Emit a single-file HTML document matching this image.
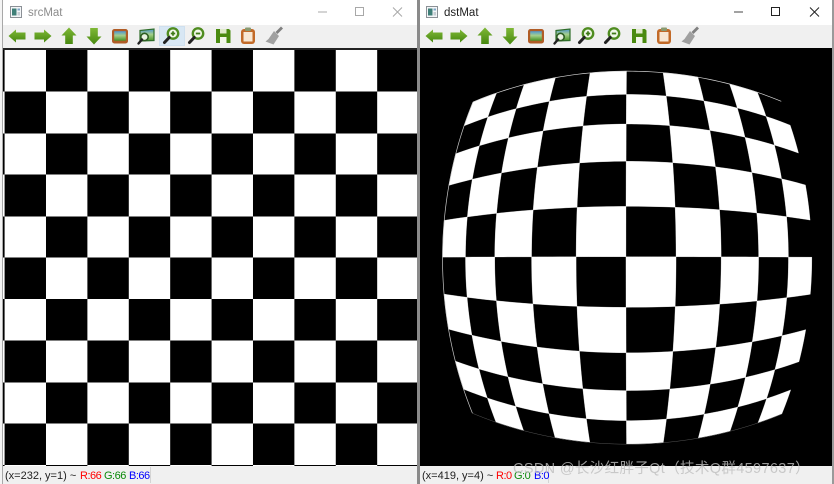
<!DOCTYPE html>
<html><head><meta charset="utf-8"><style>
html,body{margin:0;padding:0;width:834px;height:484px;overflow:hidden;background:#fff}
body{position:relative;font-family:"Liberation Sans","Noto Sans CJK SC",sans-serif}
.a{position:absolute}
.t{position:absolute;white-space:nowrap;font-size:11px;line-height:14px;top:468.500px;color:#222}
.k{letter-spacing:-.5px}
</style></head><body>
<div class="a" style="left:0;top:0;width:3px;height:484px;background:#f4f4f4"></div>
<div class="a" style="left:2px;top:0;width:1px;height:484px;background:#a8a8a8"></div>
<div class="a" style="left:3px;top:25px;width:414px;height:23px;background:#f0f0f0"></div>
<div class="a" style="left:3px;top:48px;width:414px;height:2px;background:#222"></div>
<div class="a" style="left:3px;top:50px;width:414px;height:416px;background:repeating-conic-gradient(#000 0 25%,#fff 0 50%) 1.6px 0/82.8px 83px"></div>
<div class="a" style="left:3px;top:466px;width:414px;height:18px;background:#f0f0f0"></div>
<div class="a" style="left:150px;top:467px;width:1px;height:16px;background:#d4d4d4"></div>
<div class="a" style="left:417px;top:0;width:3px;height:484px;background:#8a8a8a"></div>
<div class="a" style="left:420px;top:25px;width:412px;height:23px;background:#f0f0f0"></div>
<div class="a" style="left:420px;top:466px;width:412px;height:18px;background:#f0f0f0"></div>
<div class="a" style="left:548px;top:467px;width:1px;height:16px;background:#d4d4d4"></div>
<div class="a" style="left:832px;top:0;width:2px;height:484px;background:#9a9a9a"></div>
<div class="a" style="left:159px;top:26px;width:26px;height:20px;background:#d8e7f4;box-shadow:inset 0 0 0 1px #cfe0ef"></div>

<svg class="a" style="left:420px;top:48px" width="412" height="418" viewBox="420 48 412 418"><rect x="420" y="48" width="412" height="418" fill="#000"/><g id="m"></g></svg>

<svg class="a" style="left:0;top:0" width="834" height="50" viewBox="0 0 834 50">
<defs>
<linearGradient id="g" x1="0" y1="0" x2="0" y2="1"><stop offset="0" stop-color="#7fb836"/><stop offset="1" stop-color="#478810"/></linearGradient>
<linearGradient id="sky" x1="0" y1="0" x2="0" y2="1"><stop offset="0" stop-color="#4f96d0"/><stop offset=".45" stop-color="#a5cf8c"/><stop offset="1" stop-color="#459324"/></linearGradient>
<symbol id="l" viewBox="0 0 24 24" overflow="visible"><path d="M3.500 12L11 5.500V8.500H20.500V15.500H11V18.500Z" fill="url(#g)"/></symbol>
<symbol id="r" viewBox="0 0 24 24" overflow="visible"><path d="M20.500 12L13 5.500V8.500H3.500V15.500H13V18.500Z" fill="url(#g)"/></symbol>
<symbol id="u" viewBox="0 0 24 24" overflow="visible"><path d="M12 3.500L19.500 11.500H15.800V20H8.200V11.500H4.500Z" fill="url(#g)"/></symbol>
<symbol id="d" viewBox="0 0 24 24" overflow="visible"><path d="M12 20.500L19.500 12.500H15.800V4H8.200V12.500H4.500Z" fill="url(#g)"/></symbol>
<symbol id="p" viewBox="0 0 24 24" overflow="visible"><rect x="4" y="5" width="16" height="14.500" rx="2.500" fill="#b05c26"/><rect x="6.200" y="7.200" width="11.600" height="9.500" fill="url(#sky)"/></symbol>
<symbol id="f" viewBox="0 0 24 24" overflow="visible"><path d="M6 6.500L20 5V16.500L6 17Z" fill="url(#sky)" stroke="#2f6d2a" stroke-width="1.200"/><circle cx="10.500" cy="13" r="3.700" fill="#e8f2e0" stroke="#2e5e22" stroke-width="1.600"/><path d="M8 15.500L4.500 19.500" stroke="#222" stroke-width="2.400" stroke-linecap="round"/></symbol>
<symbol id="i" viewBox="0 0 24 24" overflow="visible"><circle cx="13" cy="9.500" r="5.200" fill="#f2f7ea" stroke="#4f8c20" stroke-width="2.400"/><path d="M10.800 9.500H15.200M13 7.300V11.700" stroke="#3f7a18" stroke-width="1.700"/><path d="M9.200 13.500L4.500 18.500" stroke="#222" stroke-width="3" stroke-linecap="round"/></symbol>
<symbol id="o" viewBox="0 0 24 24" overflow="visible"><circle cx="13" cy="9.500" r="5.200" fill="#f2f7ea" stroke="#4f8c20" stroke-width="2.400"/><path d="M10.800 9.500H15.200" stroke="#3f7a18" stroke-width="1.800"/><path d="M9.200 13.500L4.500 18.500" stroke="#222" stroke-width="3" stroke-linecap="round"/></symbol>
<symbol id="s" viewBox="0 0 24 24" overflow="visible"><path d="M5 5H18L19.500 6.500V19H5Z" fill="#4a8a10"/><rect x="9" y="5" width="6.500" height="4.500" fill="#e0eacc"/><rect x="9" y="13" width="6.500" height="6" fill="#f2f6ea"/></symbol>
<symbol id="c" viewBox="0 0 24 24" overflow="visible"><rect x="5" y="5" width="14" height="15" rx="3" fill="#c26a28"/><rect x="7.500" y="8" width="9" height="9.500" fill="#f8e8d4"/><rect x="9" y="3.500" width="6" height="3.500" rx="1" fill="#8a9a70"/></symbol>
<symbol id="b" viewBox="0 0 24 24" overflow="visible"><path d="M20 3.500L14.500 9" stroke="#808080" stroke-width="2.800"/><path d="M12 7L17 12L11.500 20.500L3.500 17.500L6.500 15Z" fill="#a0a0a0"/></symbol>
<symbol id="w" viewBox="0 0 12 12" overflow="visible"><rect x=".5" y=".5" width="11" height="11" fill="#f4f6f8" stroke="#8b9096"/><rect x="2" y="2.500" width="4.500" height="7" fill="#3f7f78"/><rect x="7.500" y="2.500" width="2.500" height="2" fill="#7fa8c8"/><rect x="7.500" y="6" width="2.500" height="3.500" fill="#c4ccd2"/></symbol>
</defs>
<use href="#w" x="10" y="6" width="12" height="12"/>
<use href="#w" x="426" y="6" width="12" height="12"/>
<use href="#l" x="5" y="24" width="24" height="24"/><use href="#r" x="31" y="24" width="24" height="24"/><use href="#u" x="57" y="24" width="24" height="24"/><use href="#d" x="82" y="24" width="24" height="24"/><use href="#p" x="108" y="24" width="24" height="24"/><use href="#f" x="134" y="24" width="24" height="24"/><use href="#i" x="160" y="24" width="24" height="24"/><use href="#o" x="185" y="24" width="24" height="24"/><use href="#s" x="211" y="24" width="24" height="24"/><use href="#c" x="236" y="24" width="24" height="24"/><use href="#b" x="262" y="24" width="24" height="24"/>
<use href="#l" x="422" y="24" width="24" height="24"/><use href="#r" x="447" y="24" width="24" height="24"/><use href="#u" x="473" y="24" width="24" height="24"/><use href="#d" x="498" y="24" width="24" height="24"/><use href="#p" x="524" y="24" width="24" height="24"/><use href="#f" x="550" y="24" width="24" height="24"/><use href="#i" x="575" y="24" width="24" height="24"/><use href="#o" x="601" y="24" width="24" height="24"/><use href="#s" x="627" y="24" width="24" height="24"/><use href="#c" x="652" y="24" width="24" height="24"/><use href="#b" x="678" y="24" width="24" height="24"/>
<g fill="none" stroke-width="1"><path d="M318 12H327" stroke="#a8a8a8"/><rect x="355.500" y="7.500" width="8" height="8" stroke="#a8a8a8"/><path d="M393 7.500L402 16.500M402 7.500L393 16.500" stroke="#a8a8a8"/>
<path d="M734 12H743" stroke="#444"/><rect x="771.500" y="7.500" width="8" height="8" stroke="#222"/><path d="M810 7.500L819 16.500M819 7.500L810 16.500" stroke="#222"/></g>
</svg>

<div class="t" style="left:28px;top:6px;font-size:11.500px;color:#8c8c8c">srcMat</div>
<div class="t" style="left:444px;top:6px;font-size:11.500px;color:#222">dstMat</div>
<div class="t" style="left:5px">(x=232, y=1) ~</div><div class="t k" style="left:80px;color:#f00">R:66</div><div class="t k" style="left:104px;color:#0a8a0a">G:66</div><div class="t k" style="left:129px;color:#00f">B:66</div>
<div class="t" style="left:422px">(x=419, y=4) ~</div><div class="t k" style="left:496px;color:#f00">R:0</div><div class="t k" style="left:514px;color:#0a8a0a">G:0</div><div class="t k" style="left:534px;color:#00f">B:0</div>
<div class="t" style="left:513px;top:461px;font-size:14.500px;letter-spacing:.35px;line-height:17px;color:rgba(190,190,190,.8)">CSDN @长沙红胖子Qt（技术Q群4597637）</div>

<script>
(function(){
function P(i,j){var u=i-5-0.04,v=j-5-0.03,r=Math.sqrt(u*u+v*v);var s=r<1e-6?51.5:211*Math.atan(r/4.1)/r;return [628+u*s*0.99,258.3+v*s];}
function edge(i0,j0,i1,j1,n){var o=[];for(var k=0;k<n;k++){var t=k/n;o.push(P(i0+(i1-i0)*t,j0+(j1-j0)*t));}return o;}
var h="",n=8;
function fmt(a){return a.map(function(p){return p[0].toFixed(2)+" "+p[1].toFixed(2);}).join(" ");}
for(var j=0;j<10;j++)for(var i=0;i<10;i++)if((i+j)%2==0){
 var pts=edge(i,j,i+1,j,n).concat(edge(i+1,j,i+1,j+1,n),edge(i+1,j+1,i,j+1,n),edge(i,j+1,i,j,n));
 h+='<polygon fill="#fff" stroke="#fff" stroke-width=".3" points="'+fmt(pts)+'"/>';
}
var tp=edge(0,0,10,0,60).concat([P(10,0)]),lf=edge(0,0,0,10,60).concat([P(0,10)]),bt=edge(0,10,10,10,60).concat([P(10,10)]);
h+='<polyline fill="none" stroke="#d8d8d8" stroke-width=".7" points="'+fmt(tp)+'"/>';
h+='<polyline fill="none" stroke="#c8c8c8" stroke-width=".7" points="'+fmt(lf)+'"/>';
h+='<polyline fill="none" stroke="#555" stroke-width=".5" points="'+fmt(bt)+'"/>';
document.getElementById("m").innerHTML=h;
})();
</script>
</body></html>
